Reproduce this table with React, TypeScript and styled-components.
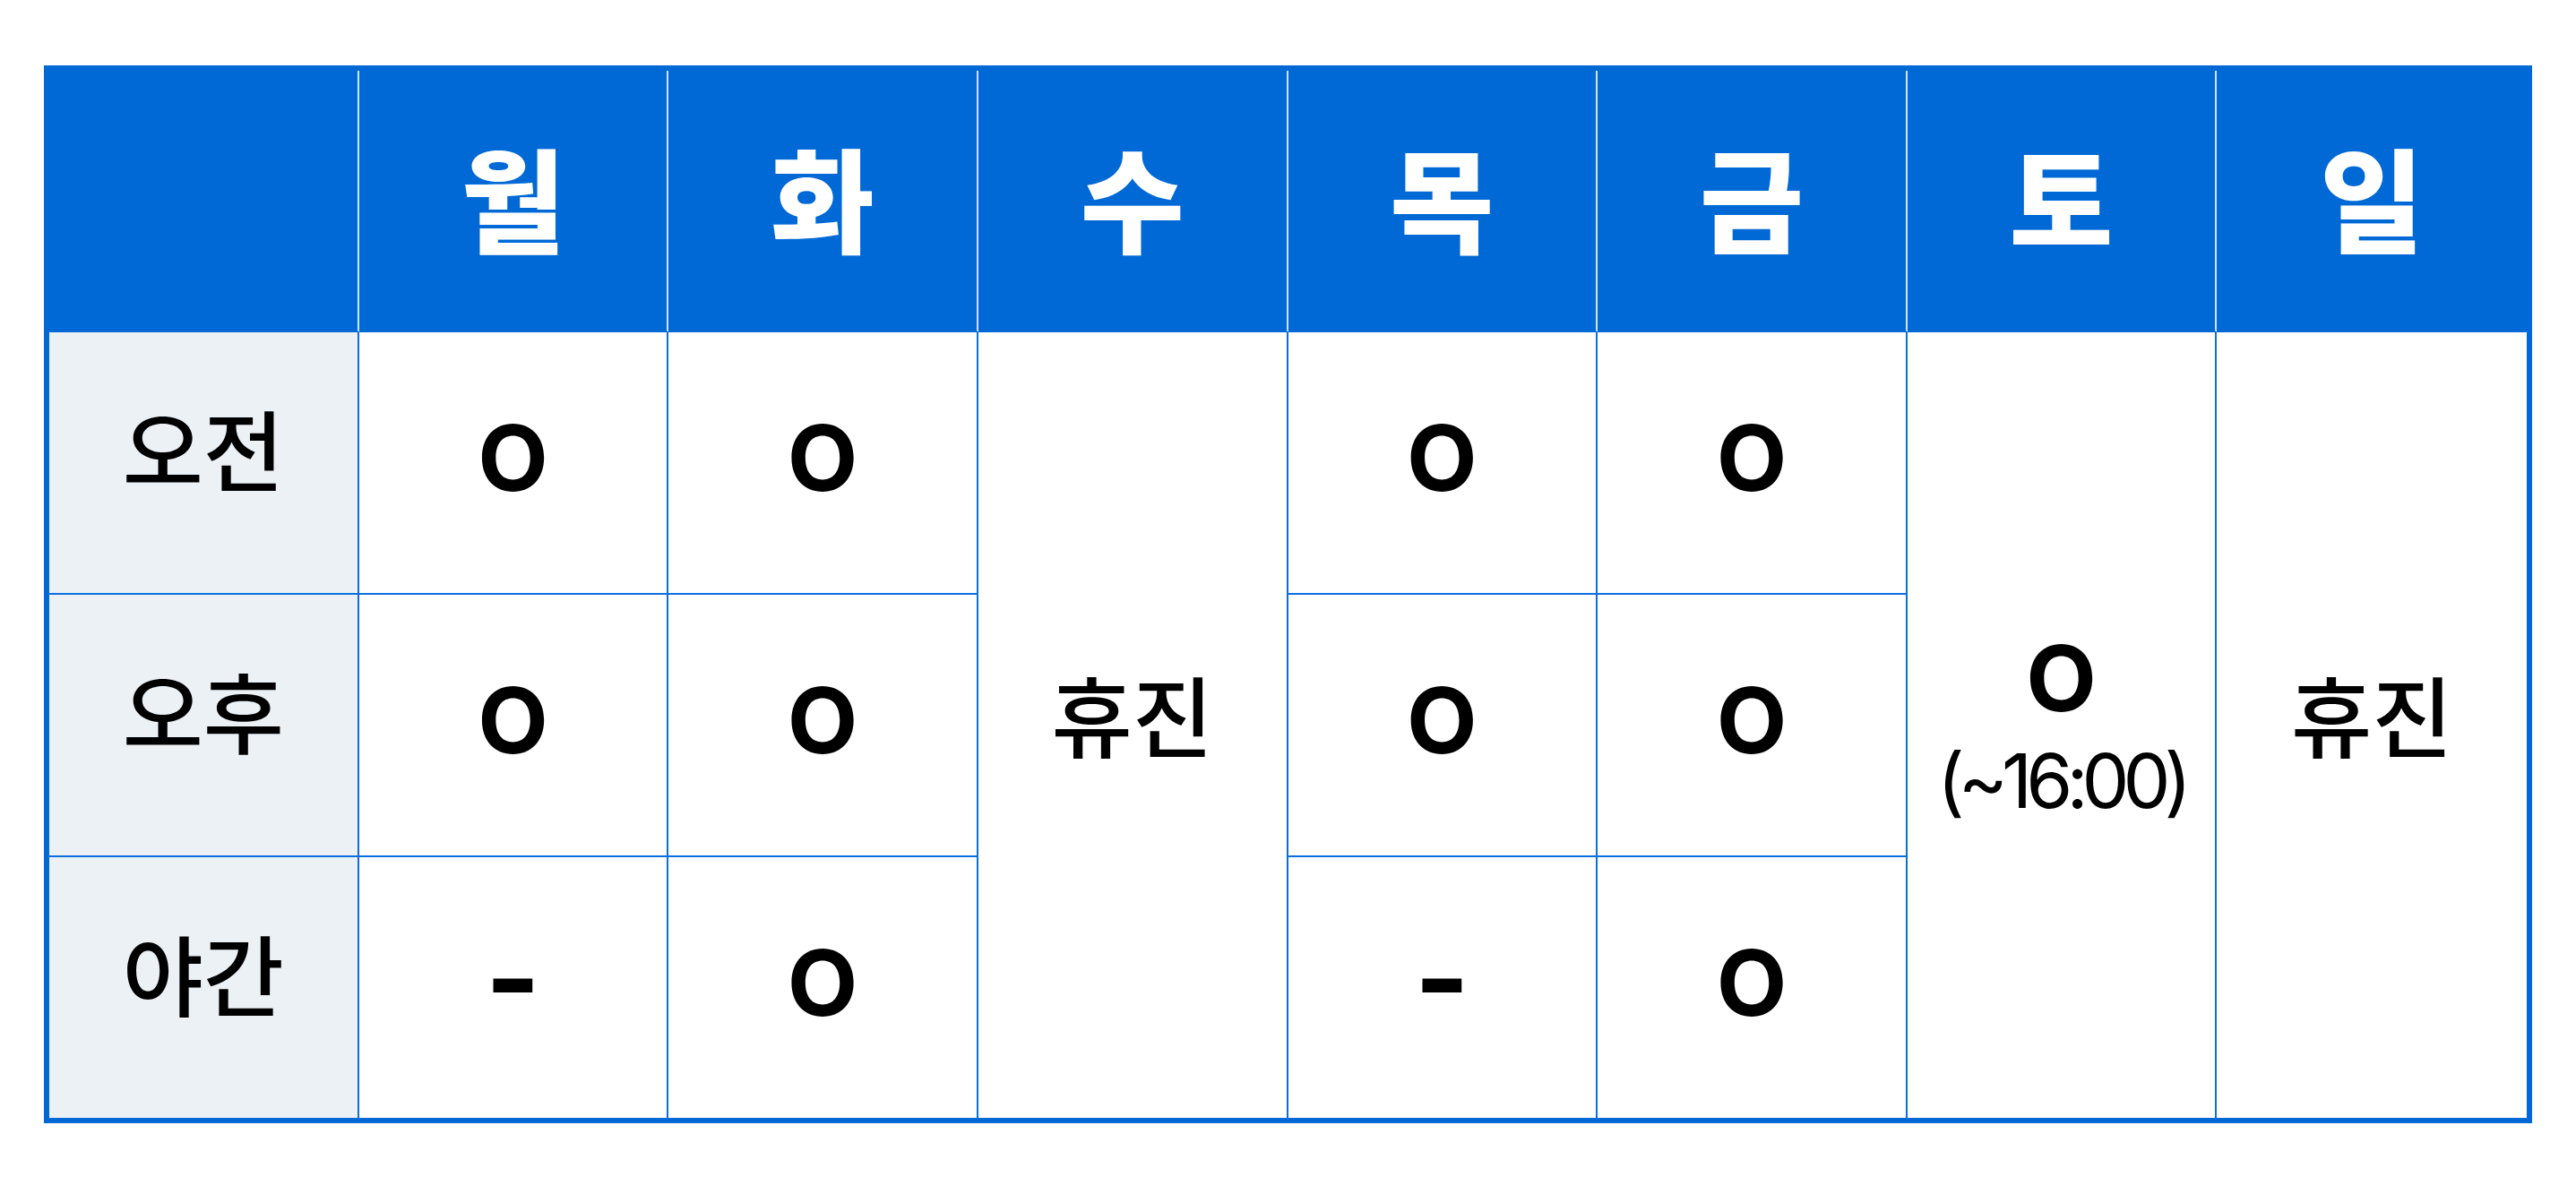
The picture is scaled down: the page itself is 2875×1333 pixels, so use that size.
import styled, { createGlobalStyle } from "styled-components";

const BLUE = "#0069d6";
const LINE = "#0b6ee0";

const GlobalStyle = createGlobalStyle`
  html, body {
    margin: 0;
    padding: 0;
    background: #ffffff;
    font-family: "Noto Sans CJK KR", "Noto Sans", sans-serif;
  }
`;

type Mark = "o" | "-";

interface Day {
  label: string;
  am?: Mark;
  pm?: Mark;
  night?: Mark;
  closed?: boolean;
  note?: string;
}

const days: Day[] = [
  { label: "월", am: "o", pm: "o", night: "-" },
  { label: "화", am: "o", pm: "o", night: "o" },
  { label: "수", closed: true },
  { label: "목", am: "o", pm: "o", night: "-" },
  { label: "금", am: "o", pm: "o", night: "o" },
  { label: "토", note: "(~16:00)" },
  { label: "일", closed: true },
];

function MarkText({ mark }: { mark?: Mark }) {
  if (mark === "-") return <Dash>-</Dash>;
  return <Circle>O</Circle>;
}

export default function App() {
  return (
    <>
      <GlobalStyle />
      <Page>
        <Schedule>
          <colgroup>
            {Array.from({ length: 8 }).map((_, i) => (
              <col key={i} />
            ))}
          </colgroup>
          <thead>
            <tr>
              <HeadCell />
              {days.map((d, i) => (
                <HeadCell key={d.label} $last={i === days.length - 1}>
                  {d.label}
                </HeadCell>
              ))}
            </tr>
          </thead>
          <tbody>
            <Row>
              <SideCell>오전</SideCell>
              {days.map((d, i) => {
                if (d.closed)
                  return (
                    <Cell key={d.label} rowSpan={3} $last={i === days.length - 1} $lastRow>
                      <Closed>휴진</Closed>
                    </Cell>
                  );
                if (d.note)
                  return (
                    <Cell key={d.label} rowSpan={3} $lastRow>
                      <Stack>
                        <Circle>O</Circle>
                        <Note>{d.note}</Note>
                      </Stack>
                    </Cell>
                  );
                return (
                  <Cell key={d.label}>
                    <MarkText mark={d.am} />
                  </Cell>
                );
              })}
            </Row>
            <Row>
              <SideCell>오후</SideCell>
              {days
                .filter((d) => !d.closed && !d.note)
                .map((d) => (
                  <Cell key={d.label}>
                    <MarkText mark={d.pm} />
                  </Cell>
                ))}
            </Row>
            <Row $last>
              <SideCell $last>야간</SideCell>
              {days
                .filter((d) => !d.closed && !d.note)
                .map((d) => (
                  <Cell key={d.label} $lastRow>
                    <MarkText mark={d.night} />
                  </Cell>
                ))}
            </Row>
          </tbody>
        </Schedule>
      </Page>
    </>
  );
}

const Page = styled.div`
  padding: 73px 0 0 49px;
`;

const Schedule = styled.table`
  width: 2777px;
  table-layout: fixed;
  border-collapse: separate;
  border-spacing: 0;
  border: 6px solid ${BLUE};
`;

const HeadCell = styled.th<{ $last?: boolean }>`
  height: 278px;
  padding: 0 0 12px;
  background: ${BLUE};
  color: #ffffff;
  font-size: 126px;
  font-weight: 900;
  line-height: 1;
  text-align: center;
  vertical-align: middle;
  border-right: ${(p) => (p.$last ? "none" : "2px solid #d3e2f6")};
  border-bottom: 2px solid ${BLUE};
`;

const Row = styled.tr<{ $last?: boolean }>`
  height: ${(p) => (p.$last ? "291px" : "293px")};
`;

const Cell = styled.td<{ $last?: boolean; $lastRow?: boolean }>`
  padding: 0;
  background: #ffffff;
  text-align: center;
  vertical-align: middle;
  color: #000000;
  border-right: ${(p) => (p.$last ? "none" : `2px solid ${LINE}`)};
  border-bottom: ${(p) => (p.$lastRow ? "none" : `2px solid ${LINE}`)};
`;

const SideCell = styled.td<{ $last?: boolean }>`
  padding: 0 0 38px;
  background: #ecf1f6;
  text-align: center;
  vertical-align: middle;
  color: #000000;
  font-size: 98px;
  font-weight: 500;
  line-height: 1;
  border-right: 2px solid ${LINE};
  border-bottom: ${(p) => (p.$last ? "none" : `2px solid ${LINE}`)};
`;

const Circle = styled.span`
  display: inline-block;
  font-family: Inter, "Noto Sans", sans-serif;
  font-size: 102px;
  font-weight: 700;
  line-height: 1;
  padding-bottom: 12px;
`;

const Dash = styled.span`
  display: inline-block;
  font-family: Inter, "Noto Sans", sans-serif;
  font-size: 132px;
  font-weight: 700;
  line-height: 1;
  padding-bottom: 22px;
`;

const Closed = styled.span`
  display: inline-block;
  font-size: 98px;
  font-weight: 500;
  line-height: 1;
  padding-bottom: 30px;
`;

const Stack = styled.div`
  display: flex;
  flex-direction: column;
  align-items: center;
  gap: 10px;
`;

const Note = styled.span`
  font-family: Inter, "Noto Sans", sans-serif;
  font-size: 84px;
  font-weight: 400;
  line-height: 1;
  letter-spacing: -7px;
`;
